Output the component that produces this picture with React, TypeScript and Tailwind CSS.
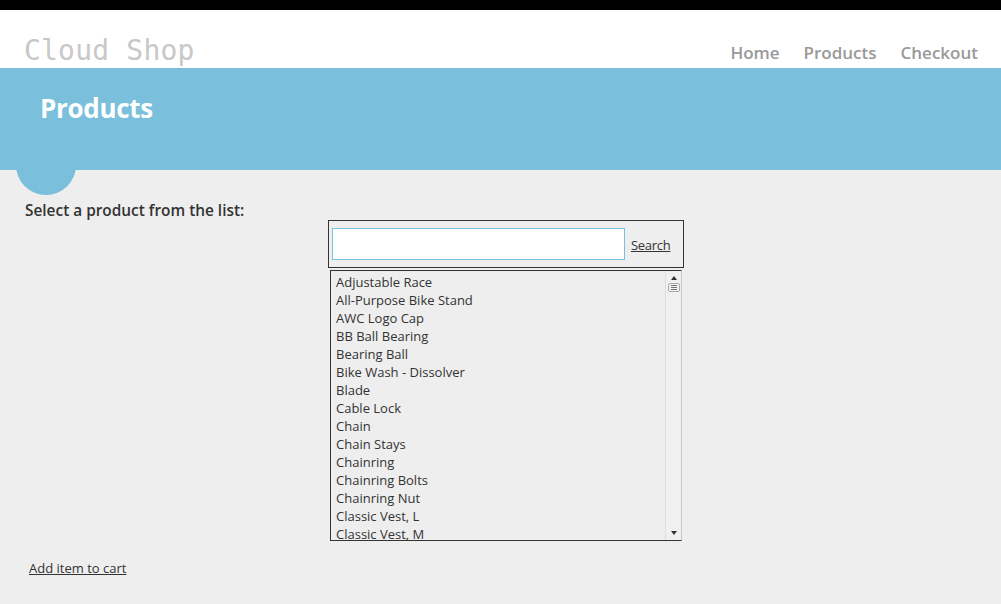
const products = [
  'Adjustable Race',
  'All-Purpose Bike Stand',
  'AWC Logo Cap',
  'BB Ball Bearing',
  'Bearing Ball',
  'Bike Wash - Dissolver',
  'Blade',
  'Cable Lock',
  'Chain',
  'Chain Stays',
  'Chainring',
  'Chainring Bolts',
  'Chainring Nut',
  'Classic Vest, L',
  'Classic Vest, M',
]

const sans = "font-['Open_Sans',sans-serif]"

export default function App() {
  return (
    <div className={`min-h-[604px] bg-[#eeeeee] ${sans}`}>
      <div className="h-[10px] bg-black" />
      <header className="h-[58px] bg-white flex items-end justify-between pl-[24px] pr-[23px]">
        <div className="font-['DejaVu_Sans_Mono',monospace] text-[28px] leading-none text-[#c8c8c8] pb-[3px] tracking-[0.2px]">
          Cloud Shop
        </div>
        <nav className="flex gap-[24px] text-[17px] font-semibold text-[#999999] pb-[7px] leading-none">
          <span>Home</span>
          <span>Products</span>
          <span>Checkout</span>
        </nav>
      </header>
      <div className="relative h-[102px] bg-[#7abfdb] pl-[40px] pt-[27px]">
        <h1 className="text-[26px] font-bold text-white leading-none tracking-[-0.3px]">Products</h1>
        <div className="absolute left-[16px] top-[67px] w-[60px] h-[60px] rounded-full bg-[#7abfdb]" />
      </div>
      <div className="relative px-[25px] pt-[33px]">
        <p className="text-[15.4px] font-semibold text-[#333] leading-none">Select a product from the list:</p>
        <div className="ml-[303px] mt-[2px] w-[356px]">
          <div className="border border-[#333] h-[48px] flex items-center pl-[3px] pr-[11px] gap-[6px]">
            <div className="w-[293px] h-[32px] bg-white border border-[#7abfdb]" />
            <span className="text-[13px] text-[#333] underline tracking-[-0.3px] mt-[2px]">Search</span>
          </div>
          <div className="ml-[2px] mt-[2px] w-[352px] h-[271px] flex border border-[#333] border-r-[#c8c8c8]">
            <div className="flex-1 overflow-hidden pl-[5px] pt-[2px]">
              {products.map((p) => (
                <div key={p} className="h-[18px] text-[13px] leading-[18px] text-[#333] whitespace-nowrap">
                  {p}
                </div>
              ))}
            </div>
            <div className="w-[16px] border-l border-[#dddddd] bg-[#f0f0f0] flex flex-col items-center justify-between py-[5px]">
              <div className="flex flex-col items-center gap-[3px]">
                <div className="w-0 h-0 border-l-[3px] border-r-[3px] border-b-[4px] border-l-transparent border-r-transparent border-b-[#333]" />
                <div className="w-[12px] h-[9px] border border-[#aaa] rounded-[2px] flex flex-col justify-center items-center gap-[1px]">
                  <div className="w-[6px] h-px bg-[#777]" />
                  <div className="w-[6px] h-px bg-[#777]" />
                  <div className="w-[6px] h-px bg-[#777]" />
                </div>
              </div>
              <div className="w-0 h-0 border-l-[3px] border-r-[3px] border-t-[4px] border-l-transparent border-r-transparent border-t-[#333]" />
            </div>
          </div>
        </div>
        <div className="mt-[18px] ml-[4px] text-[13px] text-[#333] underline">Add item to cart</div>
      </div>
    </div>
  )
}
